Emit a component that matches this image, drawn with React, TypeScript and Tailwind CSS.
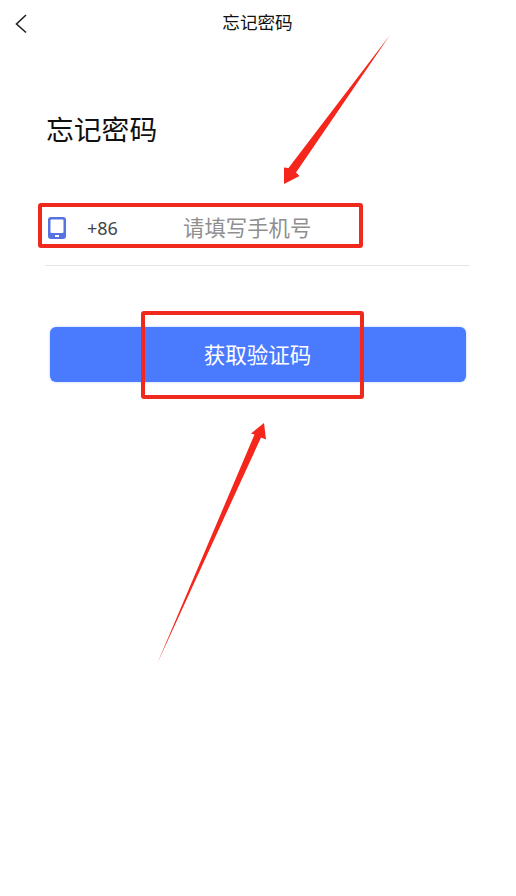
import React from 'react';

const font = { fontFamily: '"Noto Sans CJK SC", "Noto Sans", sans-serif' };

// red markup drawn over the screenshot
const Annotations: React.FC = () => (
  <>
    <div className="absolute left-[38px] top-[203px] w-[325px] h-[45px] border-[4px] border-[#f0291f] rounded-[3px]" />
    <div className="absolute left-[141px] top-[311px] w-[223px] h-[88px] border-[4px] border-[#f0291f] rounded-[3px]" />
    <svg className="absolute left-0 top-0" width="516" height="896" viewBox="0 0 516 896">
      <path d="M390 35 L296 172.5 L299.5 176 L284 184 L284 167.5 L288.5 168 Z" fill="#f5261b" />
      <path d="M157 664 L254.5 434.5 L251 433.5 L264 423 L266 439.5 L261 437.5 Z" fill="#f5261b" />
    </svg>
  </>
);

export default function App() {
  return (
    <div className="relative w-[516px] h-[896px] bg-white overflow-hidden" style={font}>
      <div className="relative h-[46px] flex items-center justify-center">
        <svg className="absolute left-[14px] top-[13px]" width="14" height="21" viewBox="0 0 14 21" fill="none">
          <path d="M12 2 L2.5 11 L12 19.5" stroke="#222" strokeWidth="1.6" />
        </svg>
        <span className="text-[17.6px] leading-[44px] mb-[2px] pr-[1px] text-[#111]">忘记密码</span>
      </div>

      <div className="pl-[46px] pt-[62px] text-[27.8px] leading-[40px] text-[#111]">忘记密码</div>

      <div className="mt-[57px] ml-[45px] w-[425px] h-[61px] border-b border-[#e6e6e6] flex items-start">
        <svg className="mt-[12px] ml-[3px]" width="18" height="22" viewBox="0 0 18 22">
          <rect width="18" height="22" rx="3" fill="#5773df" />
          <rect x="2.5" y="2.5" width="13" height="13.5" rx="1" fill="#fff" />
          <rect x="7" y="18" width="4" height="2" fill="#fff" />
        </svg>
        <span className="ml-[21px] mt-[10px] w-[96px] text-[18px] leading-[26px] text-[#444]" style={{ fontFamily: '"Noto Sans", sans-serif' }}>+86</span>
        <span className="mt-[9px] text-[21.4px] leading-[26px] text-[#8f8f8f]">请填写手机号</span>
      </div>

      <button className="block mt-[61px] ml-[50px] w-[416px] h-[55px] rounded-[6px] bg-[#4a7bff] shadow-[0_0_3px_#b9d2ff] text-white text-[21.5px] pr-[1px]">
        获取验证码
      </button>

      <Annotations />
    </div>
  );
}
